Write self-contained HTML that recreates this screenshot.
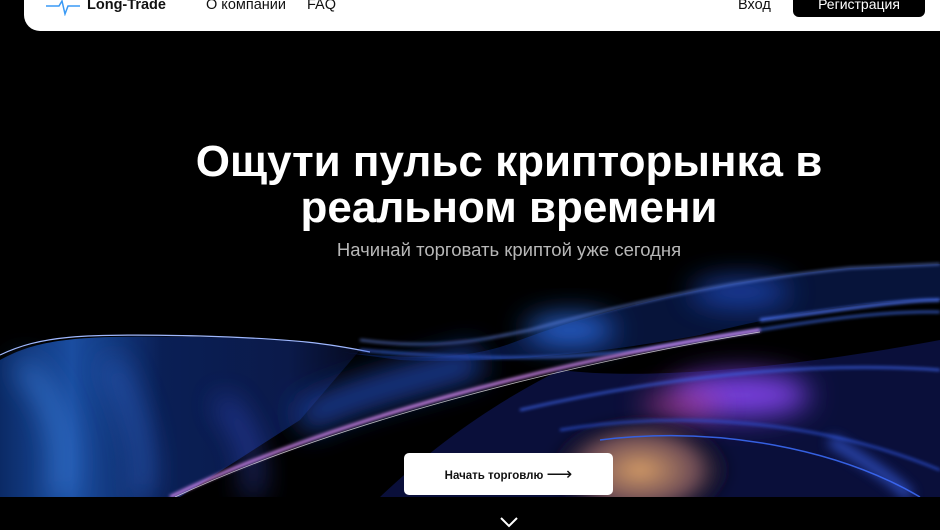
<!DOCTYPE html>
<html><head><meta charset="utf-8"><style>
*{margin:0;padding:0;box-sizing:border-box}
body{width:940px;height:530px;background:#000;overflow:hidden;position:relative;font-family:"Liberation Sans",Arial,sans-serif}
.hdr{position:absolute;left:24px;top:-20px;width:940px;height:51px;background:#fff;border-radius:0 0 0 16px}
.t{position:absolute;font-size:14.5px;color:#111;top:-3px}
.reg{position:absolute;left:793px;top:-10px;width:132px;height:27px;background:#000;border-radius:0 0 6px 6px;color:#fff;font-size:14px;text-align:center;line-height:29px}
h1{position:absolute;left:0;width:1018px;text-align:center;top:139px;font-size:44px;line-height:46px;color:#fff;font-weight:700}
.sub{position:absolute;left:0;width:1018px;text-align:center;top:239px;font-size:18.5px;color:#b8b8b8}
.btn{position:absolute;left:404px;top:453px;width:209px;height:42px;background:#fff;border-radius:5px;font-size:11.5px;font-weight:700;color:#111;text-align:center;line-height:42px}
</style></head><body>
<svg width="940" height="530" style="position:absolute;left:0;top:0">
<defs>
<filter id="b6" x="-100%" y="-100%" width="300%" height="300%"><feGaussianBlur stdDeviation="6"/></filter>
<filter id="b14" x="-100%" y="-100%" width="300%" height="300%"><feGaussianBlur stdDeviation="14"/></filter>
<filter id="b2" x="-20%" y="-100%" width="140%" height="300%"><feGaussianBlur stdDeviation="1.5"/></filter>
<clipPath id="cp"><rect x="0" y="0" width="940" height="497"/></clipPath>
<linearGradient id="lg" x1="0" y1="0" x2="1" y2="0"><stop offset="0" stop-color="#0b2a66"/><stop offset=".2" stop-color="#1a4da0"/><stop offset=".45" stop-color="#0a1f55"/><stop offset=".8" stop-color="#0b1a4a"/><stop offset="1" stop-color="#050a20"/></linearGradient>
<radialGradient id="or" cx=".5" cy=".5" r=".5"><stop offset="0" stop-color="#d29a66"/><stop offset=".6" stop-color="#6b4a55"/><stop offset="1" stop-color="#000" stop-opacity="0"/></radialGradient>
</defs>
<g clip-path="url(#cp)">
<path d="M0 360 C40 338 80 335 200 337 C300 339 330 345 360 350 L300 420 L180 497 L0 497Z" fill="url(#lg)"/>
<path d="M20 365 C60 400 70 450 60 497" stroke="#3a7bd8" stroke-width="14" fill="none" filter="url(#b14)"/>
<path d="M110 360 C140 420 150 470 140 497" stroke="#2f5fc0" stroke-width="16" fill="none" filter="url(#b14)" opacity=".8"/>
<path d="M220 400 C250 430 260 470 250 497" stroke="#3b4fd0" stroke-width="12" fill="none" filter="url(#b14)" opacity=".8"/>
<path d="M340 352 C420 360 470 360 520 340 C600 310 720 280 850 268 L940 264 L940 300 C850 300 760 320 700 335 C620 350 500 365 400 360Z" fill="#07143a"/>
<ellipse cx="570" cy="330" rx="45" ry="14" fill="#2a6be0" filter="url(#b14)"/>
<ellipse cx="740" cy="292" rx="50" ry="14" fill="#2250c8" filter="url(#b14)" opacity=".8"/>
<path d="M0 355 C40 336 80 333 200 336 C300 339 330 344 370 352" stroke="#9fb8ff" stroke-width="1.2" fill="none"/>
<path d="M360 340 C440 350 480 340 530 330 C620 305 730 280 850 268 L940 264" stroke="#6a8cf0" stroke-width="1.5" fill="none" filter="url(#b2)"/>
<path d="M360 350 C470 360 560 360 640 350 C760 330 860 310 940 312" stroke="#3a66e0" stroke-width="2" fill="none" filter="url(#b2)"/>
<path d="M300 420 C360 390 420 380 480 360" stroke="#1d3d9a" stroke-width="30" fill="none" filter="url(#b14)"/>
<path d="M560 370 C640 380 780 370 940 340 L940 497 L380 497 C440 440 500 400 560 370Z" fill="#0a0f3a"/>
<ellipse cx="740" cy="395" rx="70" ry="22" fill="#7a3fe0" filter="url(#b14)"/>
<ellipse cx="680" cy="405" rx="40" ry="14" fill="#c2408a" filter="url(#b14)" opacity=".6"/>
<ellipse cx="640" cy="470" rx="95" ry="55" fill="url(#or)" filter="url(#b6)"/>
<path d="M170 497 C330 420 560 360 760 330" stroke="#d58af5" stroke-width="3" fill="none" filter="url(#b2)"/>
<path d="M175 497 C330 425 560 365 760 332" stroke="#fff" stroke-width=".8" fill="none" opacity=".7"/>
<path d="M520 410 C650 380 800 360 940 370" stroke="#3b62e8" stroke-width="2" fill="none" filter="url(#b2)"/>
<path d="M560 430 C680 410 820 420 940 470" stroke="#2c4fd0" stroke-width="2" fill="none" filter="url(#b2)"/>
<path d="M600 440 C720 425 840 450 920 497" stroke="#3560e0" stroke-width="1.5" fill="none"/>
<path d="M760 320 C840 310 900 300 940 300" stroke="#4a70f0" stroke-width="3" fill="none" filter="url(#b2)"/>
<path d="M830 440 C880 470 900 485 910 497" stroke="#3f6cff" stroke-width="10" fill="none" filter="url(#b6)" opacity=".7"/>
</g>
<polyline points="501,518 509,526 517,518" stroke="#fff" stroke-width="2" fill="none"/>
</svg>
<div class="hdr"></div>
<svg width="34" height="16" style="position:absolute;left:46px;top:0"><polyline points="0,6 13,6 16,1 19,14 22,6 34,6" stroke="#3a9af5" stroke-width="1.5" fill="none"/></svg>
<div class="t" style="left:87px;font-weight:700">Long-Trade</div>
<div class="t" style="left:206px">О компании</div>
<div class="t" style="left:307px">FAQ</div>
<div class="t" style="left:738px">Вход</div>
<div class="reg">Регистрация</div>
<h1>Ощути пульс крипторынка в<br>реальном времени</h1>
<div class="sub">Начинай торговать криптой уже сегодня</div>
<div class="btn">Начать торговлю <span style="font-size:18px;font-weight:400;vertical-align:-1px">⟶</span></div>
</body></html>
